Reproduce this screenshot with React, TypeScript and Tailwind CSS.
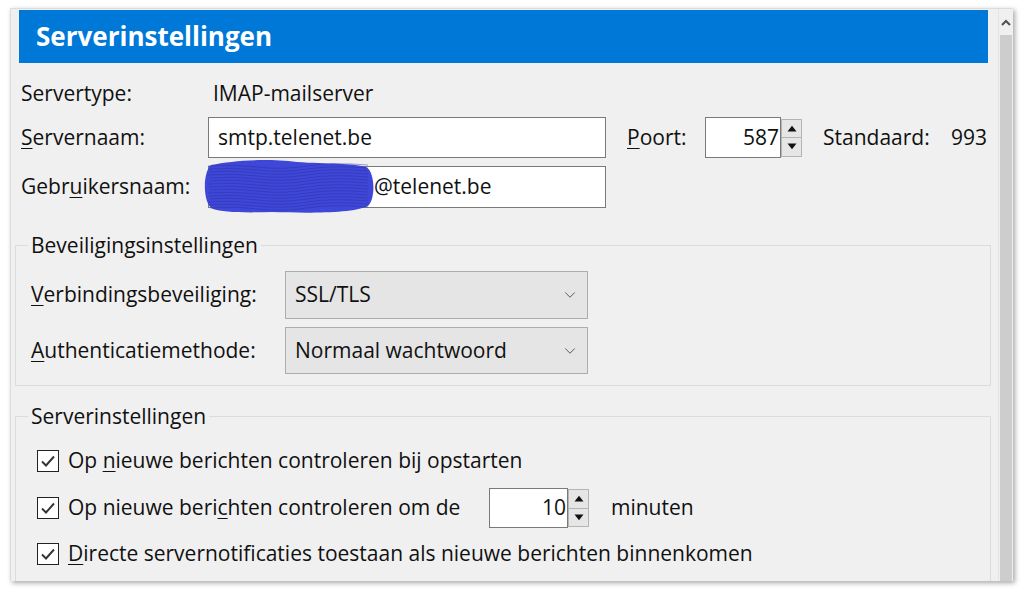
import { ChevronDown } from 'lucide-react';
import React from 'react';

const U = ({ children }: { children: React.ReactNode }) => <span className="underline underline-offset-[3px] decoration-1">{children}</span>;

const Spinner = ({ h }: { h: string }) => (
    <div className={`flex w-[21px] shrink-0 flex-col ${h} border border-[#b4b4b4] bg-[#e6e6e6]`}>
        <div className="flex flex-1 items-center justify-center border-b border-[#b4b4b4]">
            <svg width="10" height="7" viewBox="0 0 10 7">
                <path d="M0.5 6.5 L5 0.8 L9.5 6.5 Z" fill="#111" />
            </svg>
        </div>
        <div className="flex flex-1 items-center justify-center">
            <svg width="10" height="7" viewBox="0 0 10 7">
                <path d="M0.5 0.5 L5 6.2 L9.5 0.5 Z" fill="#111" />
            </svg>
        </div>
    </div>
);

const Checkbox = () => (
    <div className="flex size-[22px] shrink-0 items-center justify-center border border-[#222] bg-white">
        <svg width="16" height="14" viewBox="0 0 16 14">
            <path d="M2 7.5 L6 11.5 L14 2.5" fill="none" stroke="#333" strokeWidth="1.9" />
        </svg>
    </div>
);

const Select = ({ value }: { value: string }) => (
    <div className="flex h-full w-[303px] shrink-0 items-center justify-between border border-[#adadad] bg-[#e5e5e5] pl-[9px] pr-[8px]">
        <span>{value}</span>
        <ChevronDown className="size-[18px] text-[#555]" strokeWidth={1.3} />
    </div>
);

const Scribble = () => (
    <svg className="absolute left-[-7px] top-[-8px]" width="172" height="56" viewBox="0 0 172 56">
        <path
            d="M9 6 C30 2 60 -1 95 3 C125 5 150 4 164 8 C173 12 174 40 166 47 C150 55 100 54 70 53 C40 54 20 53 11 50 C1 46 0 14 9 6 Z"
            fill="#3f47d8"
        />
        {Array.from({ length: 15 }, (_, i) => (
            <path
                key={i}
                d={`M${6 + (i % 3)} ${7 + i * 3} Q30 ${5 + i * 3} 55 ${8 + i * 3} T105 ${7 + i * 3} T166 ${6 + i * 3}`}
                fill="none"
                stroke="#2a2f9e"
                strokeOpacity="0.5"
                strokeWidth="0.9"
            />
        ))}
    </svg>
);

export default function App() {
    return (
        <div className="h-[590px] w-[1024px] overflow-hidden bg-white pl-[10px] pt-[8px] font-['Open_Sans',sans-serif] text-[21px] text-[#111]">
            <div className="flex h-[573px] w-[1003px] overflow-hidden border-l border-t border-[#dcdcdc] bg-[#f0f0f0] shadow-[2px_2px_5px_rgba(0,0,0,0.35)]">
                <div className="flex w-[987px] shrink-0 flex-col">
                    <div className="ml-[8px] mr-[10px] mt-[1px] flex h-[53px] shrink-0 items-center bg-[#0078d7] pl-[17px] text-[26px] font-bold text-white">
                        Serverinstellingen
                    </div>

                    <div className="mt-[18px] flex h-[26px] shrink-0 items-center pl-[10px]">
                        <span className="w-[192px]">Servertype:</span>
                        <span>IMAP-mailserver</span>
                    </div>

                    <div className="mt-[10px] flex h-[41px] shrink-0 items-center pl-[10px]">
                        <span className="w-[187px]">
                            <U>S</U>ervernaam:
                        </span>
                        <div className="flex h-full w-[398px] items-center border border-[#7a7a7a] bg-white pl-[9px]">
                            smtp.telenet.be
                        </div>
                        <span className="ml-[21px] w-[78px]">
                            <U>P</U>oort:
                        </span>
                        <div className="flex h-full w-[76px] items-center justify-end border border-[#7a7a7a] bg-white pr-[1px]">
                            587
                        </div>
                        <Spinner h="h-[38px]" />
                        <span className="ml-[21px] w-[128px]">Standaard:</span>
                        <span>993</span>
                    </div>

                    <div className="mt-[8px] flex h-[42px] shrink-0 items-center pl-[10px]">
                        <span className="w-[187px]">
                            Gebr<U>u</U>ikersnaam:
                        </span>
                        <div className="relative flex h-full w-[398px] items-center border border-[#7a7a7a] bg-white pl-[165px]">
                            <Scribble />
                            @telenet.be
                        </div>
                    </div>

                    <fieldset className="ml-[4px] mt-[25px] w-[976px] shrink-0 border border-[#dcdcdc] pb-[11px]">
                        <legend className="ml-[12px] px-[3px] leading-[24px]">Beveiligingsinstellingen</legend>
                        <div className="mt-[14px] flex h-[48px] items-center pl-[15px]">
                            <span className="w-[254px]">
                                <U>V</U>erbindingsbeveiliging:
                            </span>
                            <Select value="SSL/TLS" />
                        </div>
                        <div className="mt-[8px] flex h-[47px] items-center pl-[15px]">
                            <span className="w-[254px]">
                                <U>A</U>uthenticatiemethode:
                            </span>
                            <Select value="Normaal wachtwoord" />
                        </div>
                    </fieldset>

                    <fieldset className="ml-[4px] mt-[18px] w-[976px] shrink-0 border border-[#dcdcdc] pb-[40px]">
                        <legend className="ml-[12px] px-[3px] leading-[24px]">Serverinstellingen</legend>
                        <div className="mt-[13px] flex h-[40px] items-center gap-[9px] pl-[21px]">
                            <Checkbox />
                            <span>
                                Op <U>n</U>ieuwe berichten controleren bij opstarten
                            </span>
                        </div>
                        <div className="mt-[4px] flex h-[46px] items-center pl-[21px]">
                            <Checkbox />
                            <span className="ml-[9px] w-[421px]">
                                Op nieuwe beri<U>c</U>hten controleren om de
                            </span>
                            <div className="flex h-[40px] w-[79px] items-center justify-end border border-[#7a7a7a] bg-white pr-[1px]">
                                10
                            </div>
                            <Spinner h="h-[38px]" />
                            <span className="ml-[22px]">minuten</span>
                        </div>
                        <div className="mt-[3px] flex h-[40px] items-center gap-[9px] pl-[21px]">
                            <Checkbox />
                            <span>
                                <U>D</U>irecte servernotificaties toestaan als nieuwe berichten binnenkomen
                            </span>
                        </div>
                    </fieldset>
                </div>

                <div className="flex w-[15px] shrink-0 flex-col border-l border-[#e4e4e4]">
                    <div className="flex h-[26px] shrink-0 items-center justify-center">
                        <svg width="10" height="7" viewBox="0 0 10 7">
                            <path d="M1 6 L5 2 L9 6" fill="none" stroke="#505050" strokeWidth="2" />
                        </svg>
                    </div>
                    <div className="ml-[1px] w-[12px] flex-1 bg-[#cdcdcd]" />
                </div>
            </div>
        </div>
    );
}
